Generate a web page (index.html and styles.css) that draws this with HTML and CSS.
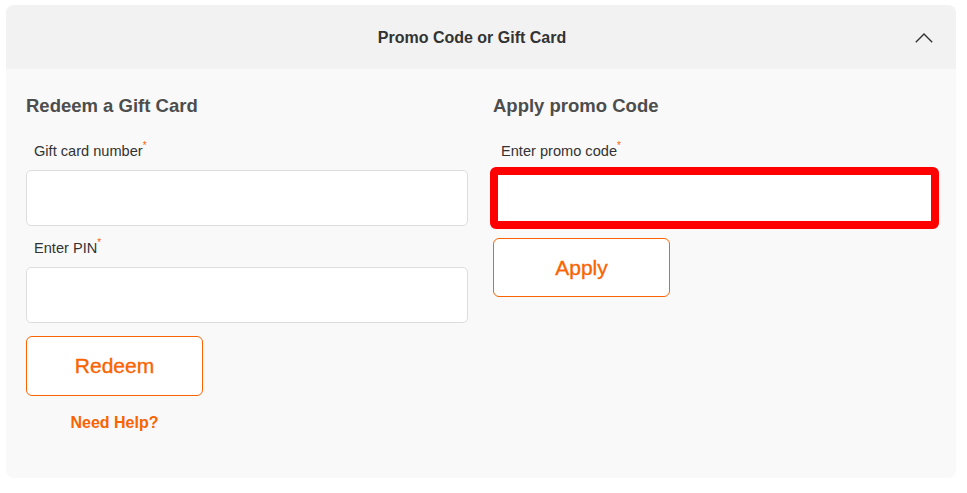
FILE: index.html
```html
<!DOCTYPE html>
<html lang="en">
<head>
  <meta charset="UTF-8">
  <title>Promo Code or Gift Card</title>
  <link rel="stylesheet" href="styles.css">
</head>
<body>
  <div class="card">
    <div class="card-header">
      <span class="card-title">Promo Code or Gift Card</span>
      <svg class="chevron" width="18" height="11" viewBox="0 0 18 11">
        <path d="M0.8 10.2 L9 2 L17.2 10.2" fill="none" stroke="#333" stroke-width="1.4"/>
      </svg>
    </div>

    <div class="card-body">
      <!-- gift card -->
      <div class="col">
        <h3 class="col-title">Redeem a Gift Card</h3>
        <div class="field">
          <label class="field-label">Gift card number<sup>*</sup></label>
          <input class="field-input" type="text">
        </div>
        <div class="field">
          <label class="field-label">Enter PIN<sup>*</sup></label>
          <input class="field-input" type="text">
        </div>
        <div class="actions">
          <button class="btn-outline">Redeem</button>
          <a class="help-link" href="#">Need Help?</a>
        </div>
      </div>

      <!-- promo code -->
      <div class="col promo">
        <h3 class="col-title">Apply promo Code</h3>
        <div class="field">
          <label class="field-label">Enter promo code<sup>*</sup></label>
          <input class="field-input error" type="text">
        </div>
        <div class="actions">
          <button class="btn-outline">Apply</button>
        </div>
      </div>
    </div>
  </div>
</body>
</html>
```

FILE: styles.css
```css
body {
  margin: 0;
  background-color: #fff;
  font-family: "Liberation Sans", Arial, sans-serif;
  color: #333;
}

.card {
  margin: 5px 11px 0 6px;
  border-radius: 8px;
  overflow: hidden;
  background-color: #f9f9f9;
}

.card-header {
  display: flex;
  align-items: center;
  height: 64px;
  padding: 0 23px;
  background-color: #f2f2f2;
}
.card-title {
  flex: 1;
  text-align: center;
  font-size: 16px;
  line-height: 20px;
  padding-top: 2px;
  font-weight: bold;
  color: #333;
}
.chevron {
  display: block;
}

.card-body {
  display: grid;
  grid-template-columns: 442px 443px;
  column-gap: 25px;
  padding: 26px 20px 45px 20px;
}

.col-title {
  margin: 0 0 25px 0;
  font-size: 18.5px;
  line-height: 22px;
  font-weight: bold;
  color: #4d4d4d;
}

.field {
  margin-bottom: 13px;
}
.promo .field {
  margin-bottom: 12px;
}
.field-label {
  display: block;
  padding-left: 8px;
  margin-bottom: 10px;
  font-size: 14.6px;
  line-height: 18px;
  color: #333;
}
.field-label sup {
  color: #f96302;
  font-size: 10px;
  line-height: 0;
  vertical-align: 7px;
}
.field-input {
  display: block;
  box-sizing: border-box;
  width: 100%;
  height: 56px;
  border: 1px solid #dddddd;
  border-radius: 5px;
  background-color: #fff;
}
.field-input.error {
  outline: 8px solid #ff0000;
  outline-offset: -5px;
  border-radius: 3px;
}

.actions {
  display: flex;
  flex-direction: column;
  width: 177px;
}
.btn-outline {
  height: 60px;
  border: 1px solid #f96302;
  border-radius: 6px;
  background-color: #fff;
  color: #f96302;
  font-family: "Liberation Sans", Arial, sans-serif;
  font-size: 21px;
  -webkit-text-stroke: 0.35px #f96302;
  cursor: pointer;
}
.promo .btn-outline {
  height: 59px;
}
.help-link {
  margin-top: 17px;
  text-align: center;
  font-size: 16px;
  line-height: 20px;
  font-weight: bold;
  color: #f96302;
  text-decoration: none;
}
```
